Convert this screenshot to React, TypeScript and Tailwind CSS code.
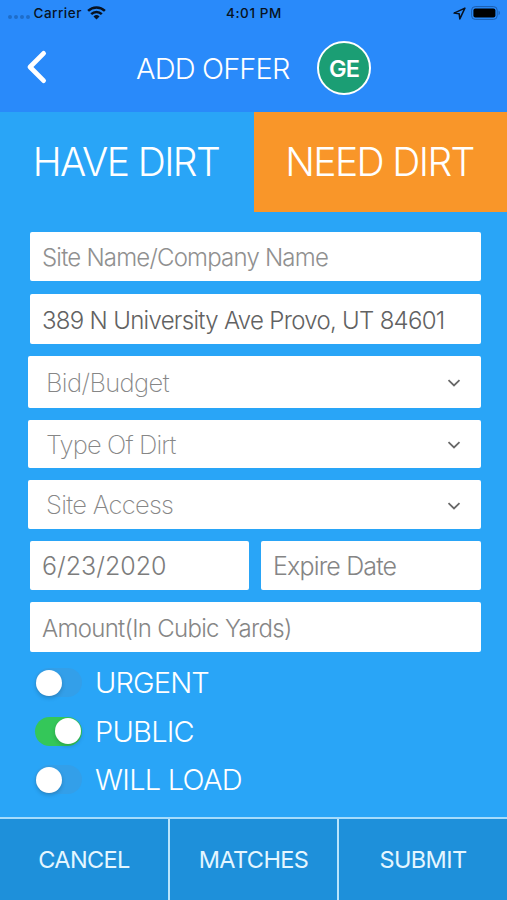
import clsx from "clsx";
import { useState } from "react";

type FieldProps = {
  placeholder: string;
  defaultValue?: string;
  className?: string;
};

function TextField({ placeholder, defaultValue, className }: FieldProps) {
  return (
    <input
      type="text"
      placeholder={placeholder}
      defaultValue={defaultValue}
      className={clsx(
        "block min-w-0 rounded-[2px] bg-white pl-3 font-light outline-none",
        className
      )}
    />
  );
}

function SelectField({ label, className }: { label: string; className?: string }) {
  return (
    <button
      type="button"
      className={clsx(
        "-ml-[2.5px] flex items-center justify-between rounded-[2px] bg-white pl-[18.5px] pr-5 text-[25.5px] font-extralight text-[#868686]",
        className
      )}
    >
      <span className="pt-[2px]">{label}</span>
      <svg width="14" height="8" viewBox="0 0 14 8" fill="none" className="mt-[3px]">
        <path d="M1.5 1.2 7 6.5l5.5-5.3" stroke="#686868" strokeWidth="1.8" />
      </svg>
    </button>
  );
}

type ToggleProps = {
  label: string;
  initial?: boolean;
  className: string;
};

function Toggle({ label, initial = false, className }: ToggleProps) {
  const [on, setOn] = useState(initial);

  return (
    <div className="flex h-[48.5px] items-center">
      <button
        type="button"
        role="switch"
        aria-checked={on}
        aria-label={label}
        onClick={() => setOn(!on)}
        className={clsx(
          "flex h-[29px] w-[47px] items-center rounded-full px-[1px]",
          on ? "justify-end bg-[#34c759]" : "justify-start bg-[#339fe9]"
        )}
      >
        <span className="size-[26px] rounded-full bg-white shadow-[0_2px_4px_rgba(0,0,0,0.18)]" />
      </button>
      <span className={clsx("ml-[13px] text-[29px] font-light", className)}>{label}</span>
    </div>
  );
}

function StatusBar() {
  return (
    <div className="grid h-[26px] grid-cols-3 items-center text-[13.5px] font-medium text-[#071222]">
      <div className="flex items-center pl-2">
        <div className="mt-2 flex gap-[2.5px]">
          {[0, 1, 2, 3].map((dot) => (
            <span key={dot} className="size-[3.5px] rounded-full bg-[#1e6dc9]" />
          ))}
        </div>
        <span className="ml-[4px] tracking-[0.5px]">Carrier</span>
        <svg width="19" height="14" viewBox="0 0 19 14" className="ml-[5px]" fill="none" stroke="#071222" strokeWidth="2.5">
          <path d="M1.1 4.9a12 12 0 0 1 16.8 0" />
          <path d="M4.2 8.2a7.6 7.6 0 0 1 10.6 0" />
          <path d="M9.5 13.6 6.5 10.5a4.3 4.3 0 0 1 6 0z" fill="#071222" stroke="none" />
        </svg>
      </div>
      <div className="pl-px text-center tracking-[0.6px]">4:01 PM</div>
      <div className="flex items-center justify-end pr-[6px]">
        <svg width="13" height="13" viewBox="0 0 12 12" fill="none" stroke="#071222" strokeWidth="1.4" strokeLinejoin="round">
          <path d="M11 1 1 5.6l4.7.7.6 4.7z" />
        </svg>
        <svg width="30" height="14" viewBox="0 0 30 14" className="ml-[5px]">
          <rect x="0.6" y="0.6" width="25.6" height="12.8" rx="3.6" fill="none" stroke="#1b5dae" />
          <rect x="2.4" y="2.4" width="22" height="9.2" rx="2" fill="#000" />
          <path d="M27.6 4.8c1.6.5 1.6 3.9 0 4.4z" fill="#1b5dae" />
        </svg>
      </div>
    </div>
  );
}

function Header() {
  return (
    <header className="h-[112px] bg-[#298afa]">
      <StatusBar />
      <div className="flex h-[86px] items-center">
        <button type="button" aria-label="Back" className="ml-[26px]">
          <svg width="22" height="34" viewBox="0 0 22 34" fill="none" stroke="#fff" strokeWidth="4.8" strokeLinecap="round" strokeLinejoin="round" className="-mt-[5px]">
            <path d="M17.6 3.4 4 17l13.6 13.6" />
          </svg>
        </button>
        <h1 className="ml-[88px] w-[155px] whitespace-nowrap text-[29px] font-light tracking-[-0.85px] text-white">
          ADD OFFER
        </h1>
        <div className="-mt-[2px] ml-[26px] flex size-[54px] items-center justify-center rounded-full border-[2.5px] border-white bg-[#1b9e74] pt-[2px] text-[23.5px] font-semibold tracking-[-0.8px] text-white">
          GE
        </div>
      </div>
    </header>
  );
}

export default function App() {
  return (
    <div className="flex h-[900px] w-[507px] flex-col overflow-hidden bg-[#29a5f7] font-['Inter',sans-serif]">
      <Header />

      <div className="flex h-[99.5px] text-[39px] font-light tracking-[-1.6px] text-white">
        <button type="button" className="w-[254px] whitespace-nowrap pr-[2px]">
          HAVE DIRT
        </button>
        <button type="button" className="flex-1 whitespace-nowrap bg-[#f99629] pr-[2px]">
          NEED DIRT
        </button>
      </div>

      <main className="flex flex-1 flex-col pl-[30px] pr-[26.5px] pt-[20px]">
        <TextField
          placeholder="Site Name/Company Name"
          className="h-[49px] pt-[3px] text-[24px] tracking-[-0.8px] placeholder:text-[#909090]"
        />
        <TextField
          placeholder="Address"
          defaultValue="389 N University Ave Provo, UT 84601"
          className="mt-[13.5px] h-[49.5px] pt-[3px] text-[24px] tracking-[-0.7px] text-[#626262]"
        />
        <SelectField label="Bid/Budget" className="mt-[12.5px] h-[51.5px] tracking-[-0.6px]" />
        <SelectField label="Type Of Dirt" className="mt-[12px] h-[48.5px] tracking-[-0.85px]" />
        <SelectField label="Site Access" className="mt-[12px] h-[49px] tracking-[-0.7px]" />
        <div className="mt-[11.5px] flex gap-3">
          <TextField
            placeholder="Start Date"
            defaultValue="6/23/2020"
            className="h-[49px] w-[219px] pt-[2px] text-[25px] text-[#7c7c7c]"
          />
          <TextField
            placeholder="Expire Date"
            className="h-[49px] flex-1 pt-[2px] text-[25px] tracking-[-0.85px] placeholder:text-[#858585]"
          />
        </div>
        <TextField
          placeholder="Amount(In Cubic Yards)"
          className="mt-[12.5px] h-[49.5px] pt-[3px] text-[24px] tracking-[-0.7px] placeholder:text-[#868686]"
        />
        <div className="ml-[5px] mt-[7px] text-white">
          <Toggle label="URGENT" className="tracking-[-0.85px]" />
          <Toggle label="PUBLIC" initial className="tracking-[-0.75px]" />
          <Toggle label="WILL LOAD" className="tracking-[-0.75px]" />
        </div>
      </main>

      <footer className="grid h-[83px] grid-cols-[170px_169px_1fr] divide-x-2 divide-[#b9e4fc] border-t-2 border-[#a5dcfc] bg-[#1e90da] text-[23.5px] tracking-[-0.6px] text-[#e4f6ff]">
        <button type="button" className="pt-px">CANCEL</button>
        <button type="button" className="pt-px">MATCHES</button>
        <button type="button" className="pt-px">SUBMIT</button>
      </footer>
    </div>
  );
}
